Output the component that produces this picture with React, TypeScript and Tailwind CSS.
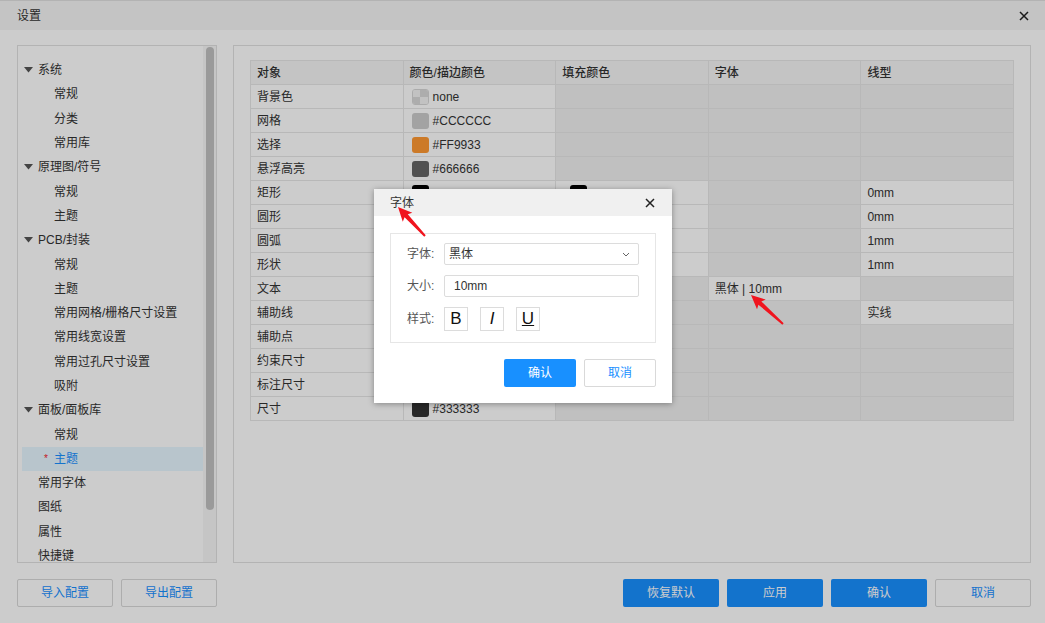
import { Fragment } from "react"

type Cell = "grey" | { sw: string; text?: string } | string

interface TreeItem {
  label: string
  kind: "group" | "child" | "leaf"
  modified?: boolean
  selected?: boolean
}

const tree: TreeItem[] = [
  { label: "系统", kind: "group" },
  { label: "常规", kind: "child" },
  { label: "分类", kind: "child" },
  { label: "常用库", kind: "child" },
  { label: "原理图/符号", kind: "group" },
  { label: "常规", kind: "child" },
  { label: "主题", kind: "child" },
  { label: "PCB/封装", kind: "group" },
  { label: "常规", kind: "child" },
  { label: "主题", kind: "child" },
  { label: "常用网格/栅格尺寸设置", kind: "child" },
  { label: "常用线宽设置", kind: "child" },
  { label: "常用过孔尺寸设置", kind: "child" },
  { label: "吸附", kind: "child" },
  { label: "面板/面板库", kind: "group" },
  { label: "常规", kind: "child" },
  { label: "主题", kind: "child", modified: true, selected: true },
  { label: "常用字体", kind: "leaf" },
  { label: "图纸", kind: "leaf" },
  { label: "属性", kind: "leaf" },
  { label: "快捷键", kind: "leaf" },
]

const headers = ["对象", "颜色/描边颜色", "填充颜色", "字体", "线型"]

const black = { sw: "#000000" }
const dark = { sw: "#333333", text: "#333333" }

const rows: [string, Cell, Cell, Cell, Cell][] = [
  ["背景色", { sw: "none", text: "none" }, "grey", "grey", "grey"],
  ["网格", { sw: "#CCCCCC", text: "#CCCCCC" }, "grey", "grey", "grey"],
  ["选择", { sw: "#FF9933", text: "#FF9933" }, "grey", "grey", "grey"],
  ["悬浮高亮", { sw: "#666666", text: "#666666" }, "grey", "grey", "grey"],
  ["矩形", black, black, "grey", "0mm"],
  ["圆形", black, black, "grey", "0mm"],
  ["圆弧", black, black, "grey", "1mm"],
  ["形状", black, black, "grey", "1mm"],
  ["文本", black, "grey", "黑体 | 10mm", "grey"],
  ["辅助线", black, "grey", "grey", "实线"],
  ["辅助点", black, "grey", "grey", "grey"],
  ["约束尺寸", dark, "grey", "grey", "grey"],
  ["标注尺寸", dark, "grey", "grey", "grey"],
  ["尺寸", dark, "grey", "grey", "grey"],
]

function Caret() {
  return (
    <svg width="9" height="6" viewBox="0 0 9 6" className="shrink-0">
      <polygon points="0,0 9,0 4.5,5.5" fill="#555" />
    </svg>
  )
}

function CloseIcon({ size = 10 }: { size?: number }) {
  return (
    <svg width={size} height={size} viewBox="0 0 10 10">
      <path d="M1 1 L9 9 M9 1 L1 9" stroke="#222" strokeWidth="1.5" />
    </svg>
  )
}

function Swatch({ color }: { color: string }) {
  if (color === "none") {
    return (
      <span className="grid h-[16px] w-[17px] shrink-0 grid-cols-2 grid-rows-2 overflow-hidden rounded-[3px] border border-[#d6d6d6]">
        <span className="bg-[#f3f3f3]" />
        <span className="bg-[#d9d9d9]" />
        <span className="bg-[#d9d9d9]" />
        <span className="bg-[#f3f3f3]" />
      </span>
    )
  }
  return (
    <span
      className="h-[16px] w-[17px] shrink-0 rounded-[3px]"
      style={{ backgroundColor: color }}
    />
  )
}

function TableCell({ cell, col }: { cell: Cell; col: number }) {
  if (cell === "grey") {
    return <td className="border border-[#e6e6e6] bg-[#f1f1f1]" />
  }
  if (typeof cell === "string") {
    return (
      <td className="border border-[#e6e6e6] bg-white px-[6px] text-[#333]">
        {cell}
      </td>
    )
  }
  return (
    <td
      className={
        "border border-[#e6e6e6] bg-white " + (col === 2 ? "pl-[14px]" : "pl-[8px]")
      }
    >
      <div className="flex items-center gap-[4px] text-[#333]">
        <Swatch color={cell.sw} />
        {cell.text && <span>{cell.text}</span>}
      </div>
    </td>
  )
}

function Arrow({ tip, tail }: { tip: [number, number]; tail: [number, number] }) {
  const dx = tail[0] - tip[0]
  const dy = tail[1] - tip[1]
  const len = Math.hypot(dx, dy)
  const ux = dx / len
  const uy = dy / len
  const px = -uy
  const py = ux
  const head = 14
  const nx = tip[0] + ux * head
  const ny = tip[1] + uy * head
  const pts = [
    [tip[0], tip[1]],
    [nx + px * 6.5, ny + py * 6.5],
    [nx + px * 2.2 - ux * 2, ny + py * 2.2 - uy * 2],
    [tail[0] + px * 1, tail[1] + py * 1],
    [tail[0] - px * 1, tail[1] - py * 1],
    [nx - px * 2.2 - ux * 2, ny - py * 2.2 - uy * 2],
    [nx - px * 6.5, ny - py * 6.5],
  ]
  return (
    <polygon
      points={pts.map((p) => p.join(",")).join(" ")}
      fill="#f0141e"
    />
  )
}

function OutlineButton({ label }: { label: string }) {
  return (
    <button className="h-[28px] w-[96px] rounded-[2px] border border-[#d9d9d9] bg-white text-[12px] text-[#1890ff]">
      {label}
    </button>
  )
}

function PrimaryButton({ label }: { label: string }) {
  return (
    <button className="h-[28px] w-[96px] rounded-[2px] bg-[#1890ff] text-[12px] text-white">
      {label}
    </button>
  )
}

function FontDialog() {
  return (
    <div className="absolute left-[374px] top-[189px] w-[298px] bg-white shadow-[0_1px_6px_rgba(0,0,0,0.35)]">
      <div className="flex h-[27px] items-center justify-between bg-[#f0f0f0] pl-[16px] pr-[17px] text-[12px] text-[#333]">
        <span>字体</span>
        <CloseIcon />
      </div>
      <div className="px-[16px] pb-[16px] pt-[17px]">
        <div className="flex flex-col gap-[10px] border border-[#e6e6e6] pb-[11px] pl-[16px] pr-[16px] pt-[9px]">
          <div className="flex items-center">
            <span className="w-[37px] shrink-0 whitespace-nowrap text-[12px] text-[#555]">字体:</span>
            <div className="flex h-[22px] flex-1 items-center justify-between rounded-[2px] border border-[#dcdcdc] pl-[4px] pr-[8px] text-[12px] text-[#333]">
              <span>黑体</span>
              <svg width="8" height="5" viewBox="0 0 8 5">
                <path d="M1 1 L4 4 L7 1" stroke="#666" strokeWidth="1" fill="none" />
              </svg>
            </div>
          </div>
          <div className="flex items-center">
            <span className="w-[37px] shrink-0 whitespace-nowrap text-[12px] text-[#555]">大小:</span>
            <div className="flex h-[22px] flex-1 items-center rounded-[2px] border border-[#dcdcdc] pl-[9px] text-[12px] text-[#333]">
              10mm
            </div>
          </div>
          <div className="flex items-center">
            <span className="w-[37px] shrink-0 whitespace-nowrap text-[12px] text-[#555]">样式:</span>
            <div className="flex gap-[12px]">
              <span className="flex h-[24px] w-[24px] items-center justify-center border border-[#dcdcdc] text-[17px] text-[#111]">
                B
              </span>
              <span className="flex h-[24px] w-[24px] items-center justify-center border border-[#dcdcdc] text-[17px] italic text-[#111]">
                I
              </span>
              <span className="flex h-[24px] w-[24px] items-center justify-center border border-[#dcdcdc] text-[17px] text-[#111] underline">
                U
              </span>
            </div>
          </div>
        </div>
        <div className="mt-[16px] flex justify-end gap-[8px]">
          <button className="h-[28px] w-[72px] rounded-[2px] bg-[#1890ff] text-[12px] text-white">
            确认
          </button>
          <button className="h-[28px] w-[72px] rounded-[2px] border border-[#d9d9d9] bg-white text-[12px] text-[#1890ff]">
            取消
          </button>
        </div>
      </div>
    </div>
  )
}

export default function App() {
  return (
    <div
      className="relative h-[623px] w-[1045px] overflow-hidden bg-white text-[12px] text-[#333]"
      style={{ fontFamily: '"Liberation Sans", "Noto Sans CJK SC", sans-serif' }}
    >
      <div className="flex h-[30px] items-center justify-between border-t border-[#e0e0e0] bg-[#f5f5f5] pl-[17px] pr-[16px] text-[12px] text-[#333]">
        <span>设置</span>
        <CloseIcon size={10} />
      </div>

      <div className="flex gap-[16px] pl-[17px] pr-[14px] pt-[15px]">
        <div className="flex h-[518px] w-[200px] border border-[#e0e0e0]">
          <div className="flex-1 overflow-hidden pl-[4px] pt-[12px]">
            {tree.map((item, i) => (
              <div
                key={i}
                className={
                  "flex h-[24.3px] items-center whitespace-nowrap " +
                  (item.selected ? "bg-[#e6f7ff] text-[#1890ff]" : "text-[#333]")
                }
              >
                {item.kind === "group" && (
                  <Fragment>
                    <span className="ml-[2px] mr-[5px] flex">
                      <Caret />
                    </span>
                    <span>{item.label}</span>
                  </Fragment>
                )}
                {item.kind === "child" && (
                  <Fragment>
                    <span className="w-[32px] pl-[22px] text-[10px] text-[#f5222d]">
                      {item.modified ? "*" : ""}
                    </span>
                    <span>{item.label}</span>
                  </Fragment>
                )}
                {item.kind === "leaf" && <span className="pl-[16px]">{item.label}</span>}
              </div>
            ))}
          </div>
          <div className="w-[13px] bg-[#f7f7f7] pl-[3px] pt-[1px]">
            <div className="h-[463px] w-[8px] rounded-full bg-[#c1c1c1]" />
          </div>
        </div>

        <div className="h-[518px] flex-1 border border-[#e0e0e0] pl-[16px] pt-[14px]">
          <table className="w-[764px] table-fixed border-collapse text-[12px]">
            <thead>
              <tr className="h-[24px]">
                {headers.map((h) => (
                  <th
                    key={h}
                    className="border border-[#e6e6e6] bg-[#f5f5f5] px-[6px] text-left font-medium text-[#333]"
                  >
                    {h}
                  </th>
                ))}
              </tr>
            </thead>
            <tbody>
              {rows.map(([name, ...cells]) => (
                <tr key={name} className="h-[24px]">
                  <td className="border border-[#e6e6e6] bg-white px-[6px] text-[#333]">
                    {name}
                  </td>
                  {cells.map((c, j) => (
                    <TableCell key={j} cell={c} col={j + 1} />
                  ))}
                </tr>
              ))}
            </tbody>
          </table>
        </div>
      </div>

      <div className="flex items-center justify-between pl-[17px] pr-[14px] pt-[16px]">
        <div className="flex gap-[8px]">
          <OutlineButton label="导入配置" />
          <OutlineButton label="导出配置" />
        </div>
        <div className="flex gap-[8px]">
          <PrimaryButton label="恢复默认" />
          <PrimaryButton label="应用" />
          <PrimaryButton label="确认" />
          <OutlineButton label="取消" />
        </div>
      </div>

      <div className="absolute inset-0 bg-black/20" />

      <FontDialog />

      <svg className="pointer-events-none absolute inset-0" width="1045" height="623">
        <Arrow tip={[398, 207]} tail={[425, 236]} />
        <Arrow tip={[751, 295]} tail={[783, 324]} />
      </svg>
    </div>
  )
}
